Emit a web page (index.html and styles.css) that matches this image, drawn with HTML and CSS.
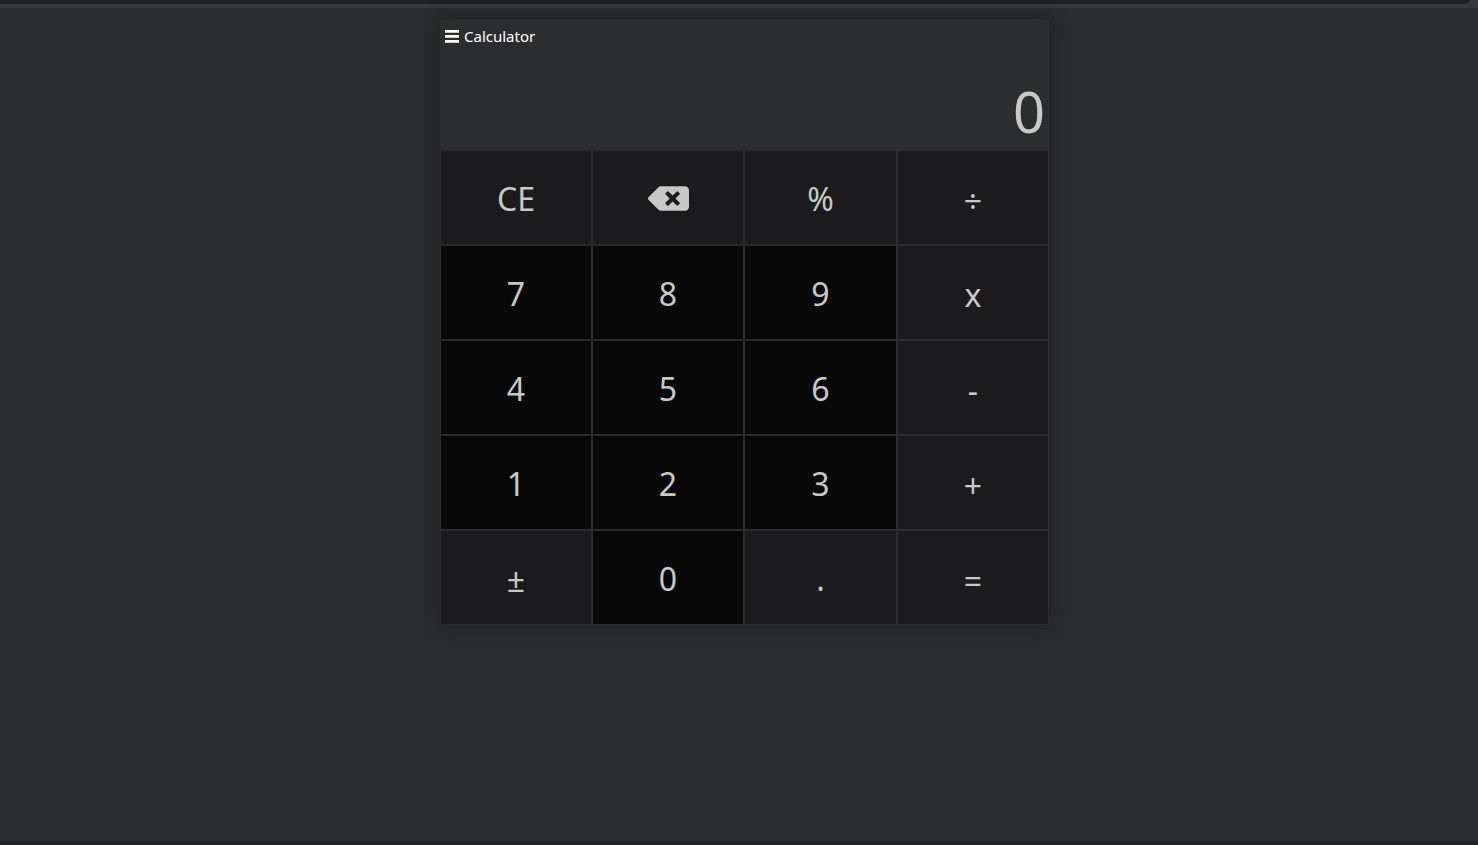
FILE: index.html
```html
<!DOCTYPE html>
<html lang="en">
<head>
<meta charset="utf-8">
<title>Calculator</title>
<link rel="stylesheet" href="styles.css">
</head>
<body>
<div class="topbar"><div class="topbar-tab"></div></div>
<main class="calculator">
  <header class="header">
    <svg class="menu-icon" viewBox="0 0 14 13"><path d="M0 0h14v2.700H0zM0 5h14v2.700H0zM0 10.100h14v2.700H0z"/></svg>
    <span class="title">Calculator</span>
  </header>
  <div class="display">0</div>
  <div class="keys">
    <button class="key">CE</button>
    <button class="key" aria-label="Backspace"><svg class="backspace" viewBox="0 64 640 384"><path d="M576 64H205.300A64 64 0 0 0 160 82.700L9.400 233.400c-12.500 12.500-12.500 32.800 0 45.300L160 429.300A64 64 0 0 0 205.300 448H576c35.300 0 64-28.700 64-64V128c0-35.300-28.700-64-64-64zm-84.700 254.100c6.200 6.200 6.200 16.400 0 22.600l-22.600 22.600c-6.200 6.200-16.400 6.200-22.600 0L384 301.300l-62.100 62.100c-6.200 6.200-16.400 6.200-22.600 0l-22.600-22.600c-6.200-6.200-6.200-16.400 0-22.600L338.800 256l-62.100-62.100c-6.200-6.200-6.200-16.400 0-22.600l22.600-22.600c6.200-6.200 16.400-6.200 22.600 0L384 210.800l62.100-62.100c6.200-6.200 16.400-6.200 22.600 0l22.600 22.600c6.200 6.200 6.200 16.400 0 22.600L429.300 256z"/></svg></button>
    <button class="key">%</button>
    <button class="key operator">÷</button>
    <button class="key digit">7</button>
    <button class="key digit">8</button>
    <button class="key digit">9</button>
    <button class="key times">x</button>
    <button class="key digit">4</button>
    <button class="key digit">5</button>
    <button class="key digit">6</button>
    <button class="key operator">-</button>
    <button class="key digit">1</button>
    <button class="key digit">2</button>
    <button class="key digit">3</button>
    <button class="key operator">+</button>
    <button class="key sign">±</button>
    <button class="key digit">0</button>
    <button class="key">.</button>
    <button class="key operator">=</button>
  </div>
</main>
<footer class="bottombar"></footer>
</body>
</html>
```
FILE: styles.css
```css
* { box-sizing: border-box; }
body {
  margin: 0;
  height: 100vh;
  display: flex;
  flex-direction: column;
  overflow: hidden;
  background: #2b2c2e;
  color: #fff;
  font-family: "Segoe UI", "Noto Sans", sans-serif;
}
.topbar {
  height: 8px;
  flex: none;
  padding-right: 8px;
  background: #37383a;
}
.topbar-tab {
  height: 4px;
  background: #202125;
  border-bottom-right-radius: 9px 4px;
}
.calculator {
  width: 609px;
  height: 606px;
  margin: 11px 0 0 440px;
  display: flex;
  flex-direction: column;
  background: #2c2d2f;
  box-shadow: 0 0 18px rgba(0, 0, 0, 0.35);
}
.header {
  height: 35px;
  padding-left: 5px;
  display: flex;
  align-items: center;
  gap: 5px;
}
.menu-icon { width: 14px; height: 13px; fill: #fffff0; }
.title { padding-bottom: 2px; font-size: 15px; }
.display {
  height: 96px;
  padding: 15px 4px 0 0;
  text-align: right;
  font-size: 56px;
  line-height: 84px;
  color: #c8c8c6;
}
.keys {
  flex: 1;
  display: grid;
  grid-template-columns: 152px 152px 153px 152px;
  grid-template-rows: repeat(5, 1fr);
}
.key {
  display: flex;
  align-items: center;
  justify-content: center;
  margin: 0;
  padding: 2px 0 0;
  border: 1px solid #2b2c2e;
  background: #1b1b1d;
  color: #c8c8c6;
  font: 32px "Segoe UI", "Noto Sans", sans-serif;
}
.digit { background: #080808; }
.operator { padding-top: 6px; }
.times, .sign { padding-top: 4px; }
.backspace { width: 41px; height: 25px; fill: currentColor; }
.bottombar { height: 4px; margin-top: auto; background: #252628; }
```
